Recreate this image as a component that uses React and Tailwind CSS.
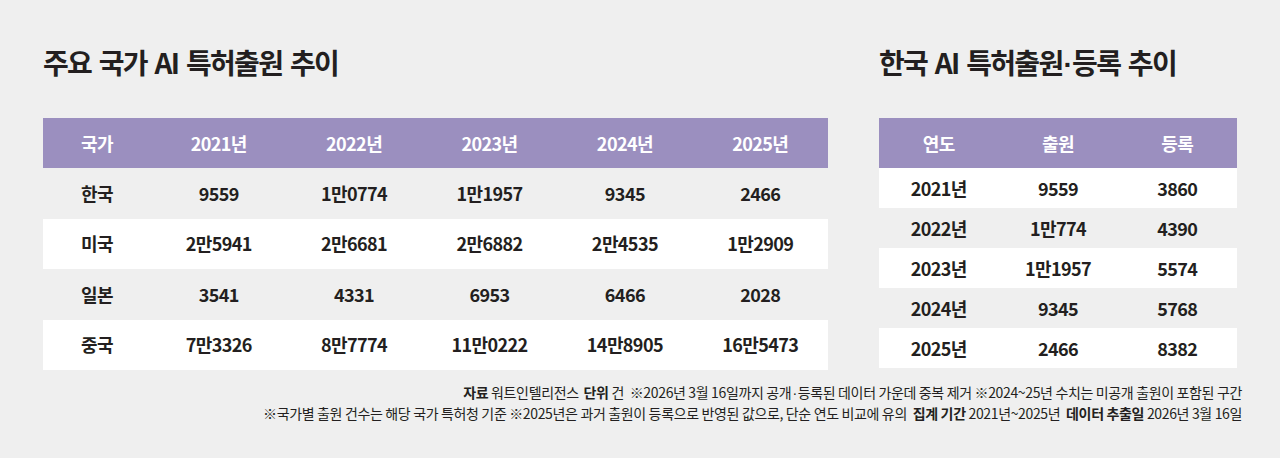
import React from "react";

const FONT = { fontFamily: '"Noto Sans CJK KR", "Noto Sans", sans-serif' };

const countries = [
  ["한국", "9559", "1만0774", "1만1957", "9345", "2466"],
  ["미국", "2만5941", "2만6681", "2만6882", "2만4535", "1만2909"],
  ["일본", "3541", "4331", "6953", "6466", "2028"],
  ["중국", "7만3326", "8만7774", "11만0222", "14만8905", "16만5473"],
];

const korea = [
  ["2021년", "9559", "3860"],
  ["2022년", "1만774", "4390"],
  ["2023년", "1만1957", "5574"],
  ["2024년", "9345", "5768"],
  ["2025년", "2466", "8382"],
];

// 좁은 가운뎃점
const Dot = () => <span className="font-['Liberation_Sans'] mx-[1px]">·</span>;

const Title = ({ children }) => (
  <h2 className="h-[78px] pt-[5px] text-[28px] leading-[34px] font-bold tracking-[-1.7px] [word-spacing:3px] text-[#231f20]">
    {children}
  </h2>
);

export default function App() {
  return (
    <div className="w-[1280px] h-[458px] bg-[#efefef] text-[#231f20] pt-[40px]" style={FONT}>
      <div className="flex pl-[43px] gap-[51px]">
        {/* 국가별 표 */}
        <section className="w-[785px]">
          <Title>주요 국가 AI 특허출원 추이</Title>
          <div className="grid grid-cols-[108px_repeat(5,1fr)] h-[50px] bg-[#9b8fbf] text-white text-[18px] font-bold tracking-[-0.6px] items-center text-center">
            {["국가", "2021년", "2022년", "2023년", "2024년", "2025년"].map((h) => (
              <div key={h}>{h}</div>
            ))}
          </div>
          {countries.map((row, i) => (
            <div
              key={row[0]}
              className={`grid grid-cols-[108px_repeat(5,1fr)] h-[50.5px] items-center text-center text-[18px] font-bold tracking-[-0.6px] ${
                i % 2 === 0 ? "bg-[#efefef]" : "bg-white"
              }`}
            >
              {row.map((c, j) => (
                <div key={j}>{c}</div>
              ))}
            </div>
          ))}
        </section>

        {/* 한국 출원·등록 표 */}
        <section className="w-[358px]">
          <Title>
            한국 AI 특허출원<Dot />등록 추이
          </Title>
          <div className="grid grid-cols-3 h-[50px] bg-[#9b8fbf] text-white text-[18px] font-bold tracking-[-0.6px] items-center text-center">
            <div>연도</div>
            <div>출원</div>
            <div>등록</div>
          </div>
          {korea.map((row, i) => (
            <div
              key={row[0]}
              className={`grid grid-cols-3 h-[40px] items-center text-center text-[18px] font-bold tracking-[-0.6px] ${
                i % 2 === 0 ? "bg-white" : "bg-[#efefef]"
              }`}
            >
              {row.map((c, j) => (
                <div key={j}>{c}</div>
              ))}
            </div>
          ))}
        </section>
      </div>

      {/* 출처·주석 */}
      <div className="mt-[12px] pr-[38px] text-right text-[14px] leading-[20px] tracking-[-0.35px] text-[#231f20]">
        <p>
          <b>자료</b> 워트인텔리전스 <b className="ml-[2px]">단위</b> 건 <span className="ml-[3px]">※2026년 3월 16일까지 공개<Dot />등록된 데이터 가운데 중복 제거 ※2024~25년 수치는 미공개 출원이 포함된 구간</span>
        </p>
        <p>
          ※국가별 출원 건수는 해당 국가 특허청 기준 ※2025년은 과거 출원이 등록으로 반영된 값으로, 단순 연도 비교에 유의 <b className="ml-[3px]">집계 기간</b> 2021년~2025년 <b className="ml-[3px]">데이터 추출일</b> 2026년 3월 16일
        </p>
      </div>
    </div>
  );
}
